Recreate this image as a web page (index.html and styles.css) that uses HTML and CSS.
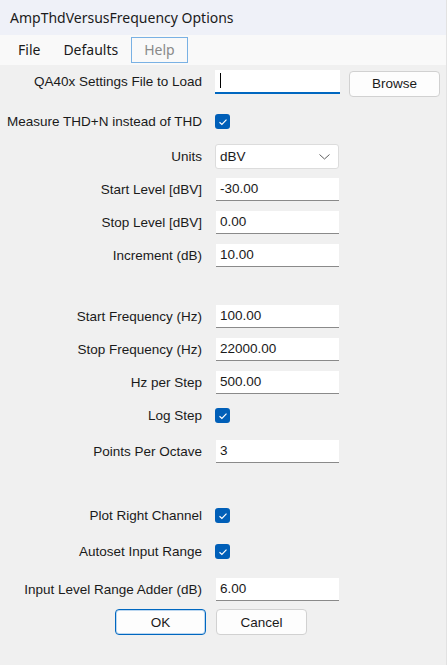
FILE: index.html
```html
<!DOCTYPE html>
<html lang="en">
<head>
    <meta charset="UTF-8">
    <meta name="viewport" content="width=device-width, initial-scale=1.0">
    <title>AmpThdVersusFrequency Options</title>
    <link rel="stylesheet" href="styles.css">
</head>
<body>
<div class="window">
    <div class="title-bar">AmpThdVersusFrequency Options</div>

    <div class="menu-bar">
        <span class="menu-item">File</span>
        <span class="menu-item">Defaults</span>
        <span class="menu-item menu-item-focus">Help</span>
    </div>

    <div class="form">
        <div class="row">
            <label class="label">QA40x Settings File to Load</label>
            <div class="text-box text-box-focus"><span class="caret"></span></div>
            <button class="button browse-button">Browse</button>
        </div>

        <div class="row row-check-first">
            <label class="label">Measure THD+N instead of THD</label>
            <span class="check-box">
                <svg width="10" height="8" viewBox="0 0 10 8"><path d="M1.5 4.2 L3.9 6.4 L8.5 1.6" fill="none" stroke="#fff" stroke-width="1.2"/></svg>
            </span>
        </div>

        <div class="row row-units">
            <label class="label">Units</label>
            <div class="select">
                <span>dBV</span>
                <svg width="11" height="6" viewBox="0 0 11 6"><path d="M0.5 0.5 L5.5 5 L10.5 0.5" fill="none" stroke="#606060" stroke-width="1"/></svg>
            </div>
        </div>

        <div class="row">
            <label class="label">Start Level [dBV]</label>
            <div class="text-box">-30.00</div>
        </div>
        <div class="row">
            <label class="label">Stop Level [dBV]</label>
            <div class="text-box">0.00</div>
        </div>
        <div class="row">
            <label class="label">Increment (dB)</label>
            <div class="text-box">10.00</div>
        </div>

        <div class="row row-section">
            <label class="label">Start Frequency (Hz)</label>
            <div class="text-box">100.00</div>
        </div>
        <div class="row">
            <label class="label">Stop Frequency (Hz)</label>
            <div class="text-box">22000.00</div>
        </div>
        <div class="row">
            <label class="label">Hz per Step</label>
            <div class="text-box">500.00</div>
        </div>
        <div class="row">
            <label class="label">Log Step</label>
            <span class="check-box">
                <svg width="10" height="8" viewBox="0 0 10 8"><path d="M1.5 4.2 L3.9 6.4 L8.5 1.6" fill="none" stroke="#fff" stroke-width="1.2"/></svg>
            </span>
        </div>
        <div class="row row-after-check">
            <label class="label">Points Per Octave</label>
            <div class="text-box">3</div>
        </div>

        <div class="row row-section-2">
            <label class="label">Plot Right Channel</label>
            <span class="check-box">
                <svg width="10" height="8" viewBox="0 0 10 8"><path d="M1.5 4.2 L3.9 6.4 L8.5 1.6" fill="none" stroke="#fff" stroke-width="1.2"/></svg>
            </span>
        </div>
        <div class="row row-after-check">
            <label class="label">Autoset Input Range</label>
            <span class="check-box">
                <svg width="10" height="8" viewBox="0 0 10 8"><path d="M1.5 4.2 L3.9 6.4 L8.5 1.6" fill="none" stroke="#fff" stroke-width="1.2"/></svg>
            </span>
        </div>
        <div class="row row-adder">
            <label class="label">Input Level Range Adder (dB)</label>
            <div class="text-box">6.00</div>
        </div>

        <div class="button-row">
            <button class="button ok-button">OK</button>
            <button class="button">Cancel</button>
        </div>
    </div>
</div>
</body>
</html>
```

FILE: styles.css
```css
body {
    margin: 0;
    background-color: #f0f0f0;
    font-family: "Liberation Sans", Arial, sans-serif;
    color: #1a1a1a;
}

.window {
    width: 447px;
    height: 665px;
    background-color: #f0f0f0;
    box-sizing: border-box;
    border-right: 1px solid #e2e2e2;
}

/* 창 제목 */
.title-bar {
    height: 35px;
    line-height: 35px;
    padding-left: 10px;
    background-color: #eff1f8;
    font-family: "Noto Sans", "Open Sans", sans-serif;
    font-size: 14px;
    color: #1b1b1b;
}

/* 메뉴 */
.menu-bar {
    height: 30px;
    background-color: #f9f9f9;
    display: flex;
    align-items: center;
    padding-left: 9px;
    gap: 5px;
    font-family: "Noto Sans", "Open Sans", sans-serif;
    font-size: 14px;
}

.menu-item {
    padding: 2px 8px;
    border: 1px solid transparent;
    height: 20px;
    line-height: 20px;
}

.menu-item-focus {
    color: #8a8a8a;
    border-color: #79b1e4;
    padding: 2px 12px;
    margin-left: -1px;
}

/* 폼 */
.form {
    padding-top: 0;
}

.row {
    display: flex;
    align-items: center;
    height: 33px;
}

.row-check-first { margin-top: 7px; }
.row-units { margin-top: 2px; }
.row-section { margin-top: 28px; }
.row-after-check { margin-top: 3px; }
.row-section-2 { margin-top: 31px; }
.row-adder { margin-top: 5px; }

.label {
    width: 215px;
    text-align: right;
    padding-right: 13px;
    box-sizing: border-box;
    font-size: 13.5px;
    color: #1a1a1a;
    white-space: nowrap;
}

.text-box {
    width: 123px;
    height: 23px;
    box-sizing: border-box;
    background-color: #fff;
    border-bottom: 1px solid #8a8a8a;
    margin-left: 1px;
    padding-left: 4px;
    font-size: 13.5px;
    line-height: 22px;
}

.text-box-focus {
    width: 125px;
    height: 24px;
    margin-left: 0;
    border-bottom: 2px solid #0067c0;
}

.caret {
    display: inline-block;
    width: 1px;
    height: 15px;
    background-color: #000;
    margin-left: 1px;
    vertical-align: middle;
}

.check-box {
    width: 15px;
    height: 15px;
    border-radius: 3px;
    background-color: #005fb8;
    display: flex;
    align-items: center;
    justify-content: center;
}

.select {
    width: 124px;
    height: 25px;
    box-sizing: border-box;
    background-color: #fff;
    border: 1px solid #dcdcdc;
    border-radius: 3px;
    display: flex;
    align-items: center;
    justify-content: space-between;
    padding: 0 8px 0 4px;
    font-size: 13.5px;
}

.button {
    height: 26px;
    width: 91px;
    box-sizing: border-box;
    background-color: #fdfdfd;
    border: 1px solid #d1d1d1;
    border-radius: 4px;
    font-family: "Liberation Sans", Arial, sans-serif;
    font-size: 13.5px;
    color: #1a1a1a;
    padding: 0;
}

.browse-button {
    margin-left: 9px;
    margin-top: 4px;
}

.button-row {
    display: flex;
    gap: 10px;
    padding-left: 115px;
    margin-top: 3px;
}

.ok-button {
    border-color: #0067c0;
    box-shadow: inset 0 0 0 1px #bcd7f0;
}
```
